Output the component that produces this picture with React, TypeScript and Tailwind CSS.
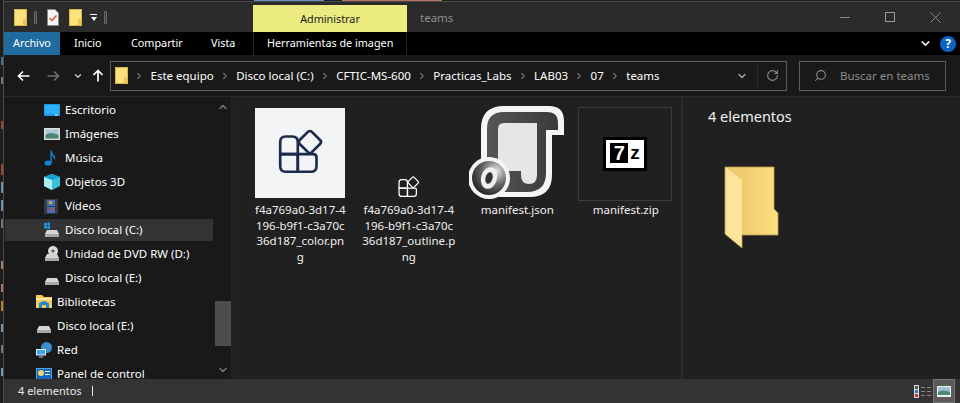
import type { ReactNode } from "react";
import { ChevronDown, ChevronRight, ChevronUp, RotateCw, Search } from "lucide-react";

function FolderSmall() {
  return (
    <svg width="13" height="17" viewBox="0 0 13 17" className="shrink-0">
      <rect x="0.5" y="0.5" width="12" height="16" fill="#fbe27f" stroke="#d8b44c" />
      <rect x="9" y="10" width="3.5" height="6.5" fill="#eec24f" />
    </svg>
  );
}

function DocCheck() {
  return (
    <svg width="12" height="17" viewBox="0 0 12 17" className="shrink-0">
      <path d="M0.5 0.5H8L11.5 4V16.5H0.5Z" fill="#f5f5f5" stroke="#888" />
      <path d="M2.5 9L5 11.5L9.5 6.5" fill="none" stroke="#e0562a" strokeWidth="1.5" />
    </svg>
  );
}

function Divider() {
  return <div className="w-[3px] h-[13px] border border-[#6b6b6b] bg-[#3a3a3a] rounded-[1px]" />;
}

function TitleBar() {
  return (
    <div className="h-[31px] shrink-0 flex bg-[#2b2b2b] border-t border-[#4a4a4a]">
      <div className="w-[249px] flex items-center">
        <div className="ml-[10px] flex items-center">
          <FolderSmall />
          <div className="ml-[7px]"><Divider /></div>
          <div className="ml-[10px]"><DocCheck /></div>
          <div className="ml-[10px]"><FolderSmall /></div>
          <div className="ml-[8px] flex flex-col items-center gap-[2px] w-[7px]">
            <div className="w-[7px] h-px bg-white" />
            <div className="w-0 h-0 border-x-[3.5px] border-x-transparent border-t-[4px] border-t-white" />
          </div>
          <div className="ml-[7px]"><Divider /></div>
        </div>
      </div>
      <div className="w-[154px] mt-[3px] bg-[#eceb80] flex items-center justify-center pt-[2px] text-[10.8px] text-[#1a1a1a]">Administrar</div>
      <div className="ml-[13px] text-[11.5px] text-[#8f8f8f] mt-[7px]">teams</div>
      <div className="flex-1" />
      <div className="w-[127px] flex items-center text-[#8a8a8a]">
        <svg width="10" height="1" className="ml-[7px]"><rect width="10" height="1" fill="#8a8a8a" /></svg>
        <svg width="10" height="10" className="ml-[35px]"><rect x="0.5" y="0.5" width="9" height="9" fill="none" stroke="#9a9a9a" /></svg>
        <svg width="11" height="11" className="ml-[35px]"><path d="M0.5 0.5L10.5 10.5M10.5 0.5L0.5 10.5" stroke="#8a8a8a" /></svg>
      </div>
    </div>
  );
}

function RibbonTabs() {
  return (
    <div className="h-[23px] shrink-0 flex items-center bg-black text-[10.8px] text-white whitespace-nowrap">
      <div className="w-[56px] h-full bg-[#1f6b9f] flex items-center justify-center">Archivo</div>
      <div className="ml-[14px] w-[57px]">Inicio</div>
      <div className="w-[80px]">Compartir</div>
      <div className="w-[42px]">Vista</div>
      <div className="h-full w-[154px] border-x border-[#262626] flex items-center pl-[13px]">Herramientas de imagen</div>
      <div className="flex-1" />
      <ChevronDown size={13} strokeWidth={3} className="text-[#e6e6e6] mr-[8px]" />
      <div className="w-[16px] h-[16px] mr-[4px] rounded-full bg-[#0b63c5] flex items-center justify-center text-[12px] font-bold text-white">?</div>
    </div>
  );
}

function Arrow({ left, dim }: { left?: boolean; dim?: boolean }) {
  const stroke = dim ? "#6f6f6f" : "#ffffff";
  return (
    <svg width="13" height="12" viewBox="0 0 13 12" className={left ? "" : "-scale-x-100"}>
      <path d="M12.5 6H1.5M6 1.5L1.5 6L6 10.5" fill="none" stroke={stroke} strokeWidth="1.7" />
    </svg>
  );
}

const crumbs = ["Este equipo", "Disco local (C:)", "CFTIC-MS-600", "Practicas_Labs", "LAB03", "07", "teams"];

function AddressRow() {
  return (
    <div className="h-[42px] shrink-0 flex items-center bg-[#191919] border-b border-[#2a2a2a]">
      <div className="ml-[13px]"><Arrow left /></div>
      <div className="ml-[17px]"><Arrow dim /></div>
      <ChevronDown size={10} strokeWidth={3} className="ml-[13px] text-[#c8c8c8]" />
      <svg width="12" height="13" viewBox="0 0 12 13" className="ml-[9px]">
        <path d="M6 12.5V1.5M1.5 6L6 1.5L10.5 6" fill="none" stroke="#fff" strokeWidth="1.7" />
      </svg>
      <div className="ml-[6px] w-[677px] h-[30px] border border-[#5f5f5f] flex items-center text-[11.5px] text-white whitespace-nowrap">
        <div className="ml-[4px]"><FolderSmall /></div>
        {crumbs.map((c) => (
          <div key={c} className="flex items-center">
            <ChevronRight size={10} strokeWidth={3} className="mx-[6.25px] text-[#6f6f6f]" />
            <span>{c}</span>
          </div>
        ))}
        <div className="flex-1" />
        <ChevronDown size={12} strokeWidth={3} className="text-[#a0a0a0] mr-[9px]" />
        <div className="w-[29px] h-full border-l border-[#2c2c2c] flex items-center justify-center">
          <RotateCw size={13} strokeWidth={2} className="text-[#8c8c8c]" />
        </div>
      </div>
      <div className="ml-[12px] w-[147px] h-[30px] border border-[#5f5f5f] flex items-center text-[11.5px] text-[#8c8c8c]">
        <Search size={13} className="ml-[14px] -scale-x-100 text-[#8c8c8c]" />
        <span className="ml-[13px]">Buscar en teams</span>
      </div>
    </div>
  );
}

function Drive({ win }: { win?: boolean }) {
  return (
    <svg width="16" height="16" viewBox="0 0 16 16" className="shrink-0">
      {win && <path d="M0 1H3V3.5H0ZM3.5 0.5H6V3.5H3.5ZM0 4H3V6.5H0ZM3.5 4H6V7H3.5Z" fill="#1f9be6" />}
      <path d="M3 8H13L15 12H1Z" fill="#d5d5d5" />
      <rect x="1" y="12" width="14" height="3" fill="#a8a8a8" />
      <rect x="11" y="13" width="2" height="1" fill="#33c24d" />
    </svg>
  );
}

function DvdDrive() {
  return (
    <svg width="16" height="16" viewBox="0 0 16 16" className="shrink-0">
      <circle cx="9" cy="5" r="5" fill="#d8d8d8" />
      <circle cx="9" cy="5" r="1.5" fill="#555" />
      <path d="M3 8H13L15 12H1Z" fill="#d5d5d5" />
      <rect x="1" y="12" width="14" height="3" fill="#a8a8a8" />
      <rect x="11" y="13" width="2" height="1" fill="#33c24d" />
    </svg>
  );
}

function Desktop() {
  return (
    <svg width="16" height="13" viewBox="0 0 16 13" className="shrink-0">
      <rect width="16" height="12" fill="#1a96ea" />
      <rect x="1" y="1" width="14" height="9" fill="#2cb1f5" />
      <rect x="11" y="10.5" width="3" height="1" fill="#fff" />
    </svg>
  );
}

function Pictures() {
  return (
    <svg width="16" height="13" viewBox="0 0 16 13" className="shrink-0">
      <rect width="16" height="12" fill="#dcdcdc" />
      <rect x="1.5" y="1.5" width="13" height="9" fill="#a9cbd8" />
      <path d="M1.5 7Q6 3 14.5 7V10.5H1.5Z" fill="#4d8578" />
    </svg>
  );
}

function Music() {
  return (
    <svg width="12" height="16" viewBox="0 0 12 16" className="shrink-0">
      <ellipse cx="4" cy="13" rx="3.5" ry="2.6" fill="#0d86dc" />
      <path d="M6.5 13V0.5H7.8Q8 4 11 6.5Q11.5 8.5 10.5 10.5Q10 6.5 7.8 5.5V13Z" fill="#0d86dc" />
    </svg>
  );
}

function Cube() {
  return (
    <svg width="16" height="16" viewBox="0 0 16 16" className="shrink-0">
      <path d="M8 0L16 3V12L8 16L0 12V3Z" fill="#3ac0d8" />
      <path d="M0 3L8 6V16L0 12Z" fill="#a5eef2" />
      <path d="M8 0L16 3L8 6L0 3Z" fill="#15a3cf" />
    </svg>
  );
}

function Film() {
  return (
    <svg width="14" height="15" viewBox="0 0 14 15" className="shrink-0">
      <rect width="14" height="15" fill="#3a3a3a" />
      <rect x="3" y="1" width="8" height="6" fill="#3f70c8" />
      <rect x="3" y="8" width="8" height="6" fill="#3f70c8" />
      <rect x="5" y="2" width="3" height="3" fill="#d8a030" />
      <rect x="6" y="9" width="3" height="3" fill="#c84a3a" />
    </svg>
  );
}

function Libraries() {
  return (
    <svg width="16" height="14" viewBox="0 0 16 14" className="shrink-0">
      <path d="M0 0H6L8 2H16V13H0Z" fill="#f5cb55" />
      <rect y="3" width="16" height="2" fill="#fbe79d" />
      <path d="M3 13V8L8 6L13 8V13H10V10H6V13Z" fill="#1f86d8" />
    </svg>
  );
}

function Network() {
  return (
    <svg width="16" height="16" viewBox="0 0 16 16" className="shrink-0">
      <circle cx="10.5" cy="5.5" r="5.5" fill="#3b8ed0" />
      <rect x="0" y="7" width="10" height="6.5" fill="#dfeef8" />
      <rect x="1" y="8" width="8" height="4.5" fill="#3da5e6" />
      <rect x="3" y="14.5" width="4" height="1" fill="#bcd" />
    </svg>
  );
}

function ControlPanel() {
  return (
    <svg width="16" height="13" viewBox="0 0 16 13" className="shrink-0">
      <rect width="16" height="13" fill="#4aa3e8" />
      <rect x="1" y="1" width="14" height="10" fill="#1068bf" />
      <circle cx="5" cy="5" r="3" fill="#f3d26a" />
      <rect x="9" y="3" width="5" height="1" fill="#fff" />
      <rect x="9" y="6" width="5" height="1" fill="#fff" />
    </svg>
  );
}

type NavEntry = { label: string; icon: ReactNode; indent?: boolean; active?: boolean };

const navItems: NavEntry[] = [
  { label: "Escritorio", icon: <Desktop />, indent: true },
  { label: "Imágenes", icon: <Pictures />, indent: true },
  { label: "Música", icon: <Music />, indent: true },
  { label: "Objetos 3D", icon: <Cube />, indent: true },
  { label: "Vídeos", icon: <Film />, indent: true },
  { label: "Disco local (C:)", icon: <Drive win />, indent: true, active: true },
  { label: "Unidad de DVD RW (D:)", icon: <DvdDrive />, indent: true },
  { label: "Disco local (E:)", icon: <Drive />, indent: true },
  { label: "Bibliotecas", icon: <Libraries /> },
  { label: "Disco local (E:)", icon: <Drive /> },
  { label: "Red", icon: <Network /> },
  { label: "Panel de control", icon: <ControlPanel /> },
];

function NavPane() {
  return (
    <div className="w-[229px] shrink-0 flex bg-[#191919] overflow-hidden border-r-2 border-[#232323]">
      <div className="w-[209px] shrink-0 pt-px">
        {navItems.map((item, i) => (
          <div
            key={i}
            className={`flex items-center text-[11.5px] text-white whitespace-nowrap ${
              item.active ? "h-[22px] my-px ml-px pl-[39px] bg-[#333333]" : item.indent ? "h-[24px] pl-[40px]" : "h-[24px] pl-[32px]"
            }`}
          >
            <div className="w-[21px] shrink-0 flex justify-start">{item.icon}</div>
            <span>{item.label}</span>
          </div>
        ))}
      </div>
      <div className="w-[16px] ml-[2px] shrink-0 flex flex-col items-center text-[#7a7a7a]">
        <ChevronUp size={12} strokeWidth={3} className="mt-[4px]" />
        <div className="w-full h-[45px] mt-[188px] bg-[#4d4d4d]" />
        <ChevronDown size={12} strokeWidth={3} className="mt-[18px]" />
      </div>
    </div>
  );
}

function TileIcon({ size }: { size: number }) {
  return (
    <svg width={size} height={size} viewBox="0 0 40 40" fill="none" stroke="currentColor" strokeWidth="2.4" strokeLinejoin="round" className="overflow-visible">
      <path d="M2 10Q2 5 7 5H13Q18 5 18 10V21H2Z" />
      <path d="M2 21H18V37H7Q2 37 2 32Z" />
      <path d="M18 21H32Q35 21 35 24V32Q35 37 30 37H18Z" />
      <rect x="21.2" y="2.2" width="15.6" height="15.6" rx="2.5" transform="rotate(45 29 10)" />
    </svg>
  );
}

function JsonIcon() {
  return (
    <svg width="96" height="96" viewBox="0 0 96 96" className="-mb-[3px]">
      <defs>
        <radialGradient id="ring" cx="0.7" cy="0.3" r="0.9">
          <stop offset="0" stopColor="#e8e8e8" />
          <stop offset="0.45" stopColor="#666666" />
          <stop offset="1" stopColor="#0c0c0c" />
        </radialGradient>
        <linearGradient id="shell" x1="0" y1="0" x2="1" y2="0">
          <stop offset="0" stopColor="#555555" />
          <stop offset="1" stopColor="#3a3a3a" />
        </linearGradient>
      </defs>
      <path d="M12 24Q12 1 35 1H80Q95 1 95 16V30H83V70Q83 92 60 92H30L12 60Z" fill="#f5f5f5" />
      <path d="M18 24Q18 7 35 7H78Q89 7 89 18V25H77V68Q77 87 58 87H32L18 60Z" fill="url(#shell)" />
      <path d="M29 24Q29 18 35 18H68V70Q68 79 60 79Q52 79 52 70V66H29Z" fill="#e6e6e6" />
      <circle cx="20" cy="73" r="21" fill="#f5f5f5" />
      <circle cx="20" cy="73" r="17" fill="url(#ring)" />
      <ellipse cx="20" cy="73" rx="8" ry="11" fill="#f0f0f0" transform="rotate(15 20 73)" />
      <ellipse cx="20" cy="73" rx="3.5" ry="6" fill="#333" transform="rotate(15 20 73)" />
    </svg>
  );
}

function SevenZip() {
  return (
    <div className="w-[94px] h-[94px] -mb-[3px] border border-[#3c3c3c] flex items-center justify-center" style={{ fontFamily: '"Liberation Sans", sans-serif' }}>
      <div className="w-[44px] h-[34px] bg-black p-[3px]">
        <div className="w-full h-full bg-white flex pt-[3px] pl-[4px] gap-[2px]">
          <div className="w-[18px] h-[20px] bg-black text-white text-[20px] leading-[20px] font-bold text-center overflow-hidden">7</div>
          <div className="text-black text-[19px] leading-[20px] font-bold">z</div>
        </div>
      </div>
    </div>
  );
}

const files: { lines: string[]; icon: ReactNode }[] = [
  {
    lines: ["f4a769a0-3d17-4", "196-b9f1-c3a70c", "36d187_color.pn", "g"],
    icon: (
      <div className="w-[90px] h-[90px] bg-[#f3f4f6] flex items-center justify-center text-[#1b2a4a]">
        <TileIcon size={44} />
      </div>
    ),
  },
  {
    lines: ["f4a769a0-3d17-4", "196-b9f1-c3a70c", "36d187_outline.p", "ng"],
    icon: <div className="text-white"><TileIcon size={21} /></div>,
  },
  { lines: ["manifest.json"], icon: <JsonIcon /> },
  { lines: ["manifest.zip"], icon: <SevenZip /> },
];

function FileList() {
  return (
    <div className="w-[450px] shrink-0 bg-[#202020] border-r-2 border-[#2a2a2a] flex items-start pl-[12.5px] pt-[4px]">
      {files.map((f) => (
        <div key={f.lines[0] + f.lines[f.lines.length - 1]} className="w-[108.5px] shrink-0 flex flex-col items-center">
          <div className="h-[97px] flex items-end justify-center">{f.icon}</div>
          <div className="mt-[4px] pl-px text-[11.5px] leading-[15.6px] text-[#f0f0f0] text-center whitespace-nowrap">
            {f.lines.map((l) => (
              <div key={l}>{l}</div>
            ))}
          </div>
        </div>
      ))}
    </div>
  );
}

function DetailsPane() {
  return (
    <div className="flex-1 bg-[#202020] pl-[25px] pt-[9px]">
      <div className="text-[14.5px] leading-[20px] text-[#f0f0f0]">4 elementos</div>
      <div className="mt-[40px] ml-[16px]">
        <svg width="56" height="82" viewBox="0 0 56 82">
          <defs>
            <linearGradient id="folderBack" x1="0" y1="0" x2="1" y2="0">
              <stop offset="0.3" stopColor="#eecb6c" />
              <stop offset="1" stopColor="#fddf82" />
            </linearGradient>
          </defs>
          <path d="M1 1H50V43L54 47V69H18V82L1 68Z" fill="url(#folderBack)" />
          <path d="M1 1L18 14V82L1 68Z" fill="#fde49b" />
          <path d="M1 1H50V43L54 47V69H18V82L1 68Z" fill="none" stroke="#b99a4d" strokeWidth="0.8" />
        </svg>
      </div>
    </div>
  );
}

function StatusBar() {
  return (
    <div className="h-[24px] shrink-0 flex items-center bg-[#333333] text-[11px] text-[#e8e8e8]">
      <span className="ml-[14px] w-[64px] whitespace-nowrap">4 elementos</span>
      <div className="ml-[10px] w-px h-[10px] bg-[#e8e8e8]" />
      <div className="flex-1" />
      <div className="flex items-center gap-[2px]">
        <div className="flex flex-col gap-px bg-[#d8d8d8] p-px">
          <div className="w-[3px] h-[3px] bg-[#555]" />
          <div className="w-[3px] h-[3px] bg-[#3d74c4]" />
          <div className="w-[3px] h-[3px] bg-[#c8343a]" />
        </div>
        <div className="grid grid-cols-2 gap-x-[2px] gap-y-[3px]">
          {[0, 1, 2, 3, 4, 5].map((i) => (
            <div key={i} className="w-[4px] h-px bg-[#8a8a8a]" />
          ))}
        </div>
      </div>
      <div className="ml-[2px] mr-[5px] w-[22px] h-full bg-[#5a5a5a] border border-[#777] flex items-center justify-center">
        <svg width="14" height="11" viewBox="0 0 14 11">
          <rect width="14" height="11" fill="#f0f0f0" />
          <rect x="1" y="1" width="12" height="8" fill="#9cc4d8" />
          <path d="M1 6Q6 3 13 6V9H1Z" fill="#4d8578" />
        </svg>
      </div>
    </div>
  );
}

const bleed: { h: number; gap: number; color: string }[] = [
  { h: 8, gap: 57, color: "#5a7fb8" },
  { h: 7, gap: 12, color: "#8a8a8a" },
  { h: 8, gap: 37, color: "#c0503c" },
  { h: 11, gap: 35, color: "#c0503c" },
  { h: 11, gap: 7, color: "#7fb0d8" },
  { h: 11, gap: 7, color: "#7fb0d8" },
  { h: 9, gap: 8, color: "#8a8a8a" },
  { h: 8, gap: 33, color: "#c49070" },
  { h: 8, gap: 15, color: "#c49070" },
  { h: 10, gap: 9, color: "#d8a020" },
  { h: 8, gap: 13, color: "#8fb8d8" },
  { h: 8, gap: 13, color: "#8a8a8a" },
  { h: 8, gap: 15, color: "#8fb8d8" },
];

export default function App() {
  return (
    <div className="w-[960px] h-[403px] flex overflow-hidden bg-[#1e1e1e]" style={{ fontFamily: '"Noto Sans", "Open Sans", sans-serif' }}>
      <div className="w-[3px] shrink-0 flex flex-col">
        {bleed.map((b, i) => (
          <div key={i} className="w-[2px] ml-px shrink-0 opacity-80" style={{ height: b.h, marginTop: b.gap, backgroundColor: b.color }} />
        ))}
      </div>
      <div className="flex-1 min-w-0 flex flex-col border-l border-[#4a4a4a]">
        {/* editor text showing above the window */}
        <div className="h-px shrink-0 flex bg-[#1e1e1e]">
          <div className="ml-[250px] w-[70px] bg-[#5f8fb5]" />
          <div className="ml-[18px] w-[100px] bg-[#b5705f]" />
        </div>
        <TitleBar />
        <RibbonTabs />
        <AddressRow />
        <div className="h-[282px] shrink-0 flex overflow-hidden">
          <NavPane />
          <FileList />
          <DetailsPane />
        </div>
        <StatusBar />
      </div>
    </div>
  );
}
